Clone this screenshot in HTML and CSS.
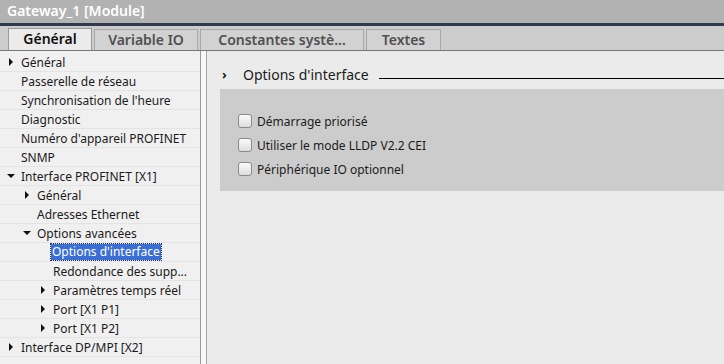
FILE: index.html
```html
<!DOCTYPE html>
<html lang="fr">
<head>
    <meta charset="UTF-8">
    <title>Gateway_1 [Module]</title>
    <link rel="stylesheet" href="styles.css">
</head>
<body>
    <div class="titlebar">Gateway_1 [Module]</div>

    <div class="tabs">
        <div class="tab active">Général</div>
        <div class="tab w-var">Variable IO</div>
        <div class="tab w-const">Constantes systè...</div>
        <div class="tab w-txt">Textes</div>
    </div>

    <div class="main">
        <div class="tree">
            <div class="row l0"><span class="arrow right"></span>Général</div>
            <div class="row l0"><span class="arrow"></span>Passerelle de réseau</div>
            <div class="row l0"><span class="arrow"></span>Synchronisation de l'heure</div>
            <div class="row l0"><span class="arrow"></span>Diagnostic</div>
            <div class="row l0"><span class="arrow"></span>Numéro d'appareil PROFINET</div>
            <div class="row l0"><span class="arrow"></span>SNMP</div>
            <div class="row l0"><span class="arrow down"></span>Interface PROFINET [X1]</div>
            <div class="row l1"><span class="arrow right"></span>Général</div>
            <div class="row l1"><span class="arrow"></span>Adresses Ethernet</div>
            <div class="row l1"><span class="arrow down"></span>Options avancées</div>
            <div class="row l2"><span class="arrow"></span><span class="selected">Options d'interface</span></div>
            <div class="row l2"><span class="arrow"></span>Redondance des supp...</div>
            <div class="row l2"><span class="arrow right"></span>Paramètres temps réel</div>
            <div class="row l2"><span class="arrow right"></span>Port [X1 P1]</div>
            <div class="row l2"><span class="arrow right"></span>Port [X1 P2]</div>
            <div class="row l0"><span class="arrow right"></span>Interface DP/MPI [X2]</div>
        </div>

        <div class="splitter"></div>

        <div class="content">
            <div class="section-head">
                <span class="chevron">›</span>
                <span class="section-title">Options d'interface</span>
                <span class="section-line"></span>
            </div>
            <div class="group">
                <label class="check"><span class="box"></span>Démarrage priorisé</label>
                <label class="check"><span class="box"></span>Utiliser le mode LLDP V2.2 CEI</label>
                <label class="check"><span class="box"></span>Périphérique IO optionnel</label>
            </div>
        </div>
    </div>
</body>
</html>
```

FILE: styles.css
```css
body {
    margin: 0;
    font-family: "Noto Sans", "Open Sans", sans-serif;
    font-size: 12px;
    color: #1b1b1b;
    background-color: #ebebeb;
    height: 364px;
    overflow: hidden;
}
.titlebar {
    height: 23px;
    line-height: 22px;
    padding-left: 7px;
    background-color: #b2b2b2;
    border-bottom: 3px solid #333a4d;
    color: #ffffff;
    font-size: 14px;
    font-weight: 600;
}
.tabs {
    display: flex;
    align-items: flex-end;
    gap: 2px;
    height: 24px;
    padding-left: 8px;
    background-color: #cccccc;
    border-bottom: 1px solid #777777;
}
.tab {
    box-sizing: border-box;
    height: 21px;
    line-height: 20px;
    text-align: center;
    font-size: 14px;
    font-weight: 600;
    color: #505050;
    background-color: #d2d2d2;
    border: 1px solid #a8a8a8;
    border-bottom: none;
}
.tab.active {
    width: 84px;
    height: 22px;
    color: #111111;
    background-color: #ebebeb;
    border-color: #9a9a9a;
}
.w-var {
    width: 104px;
}
.w-const {
    width: 164px;
}
.w-txt {
    width: 75px;
}
.main {
    display: flex;
    height: 313px;
}
.tree {
    width: 200px;
    padding-top: 2px;
    background-color: #f0f0f0;
}
.row {
    display: flex;
    align-items: center;
    height: 18px;
    border-bottom: 1px solid #e4e4e4;
    white-space: nowrap;
}
.l0 {
    padding-left: 6px;
}
.l1 {
    padding-left: 22px;
}
.l2 {
    padding-left: 38px;
}
.arrow {
    display: inline-block;
    width: 15px;
    height: 8px;
    position: relative;
}
.arrow.right::before {
    content: "";
    position: absolute;
    left: 3px;
    top: 0;
    border-left: 4px solid #111;
    border-top: 4px solid transparent;
    border-bottom: 4px solid transparent;
}
.arrow.down::before {
    content: "";
    position: absolute;
    left: 1px;
    top: 2px;
    border-top: 4px solid #111;
    border-left: 4px solid transparent;
    border-right: 4px solid transparent;
}
.selected {
    margin-left: -2px;
    padding: 0 1px;
    line-height: 16px;
    background-color: #3b6fd6;
    color: #ffffff;
    outline: 1px dotted #1c2e58;
}
.splitter {
    width: 5px;
    background-color: #f7f7f7;
    border-left: 1px solid #999999;
    border-right: 1px solid #a4a4a4;
    margin-right: 1px;
}
.content {
    flex: 1;
    padding-top: 14px;
    padding-left: 12px;
}
.section-head {
    display: flex;
    align-items: center;
    height: 18px;
}
.chevron {
    width: 21px;
    padding-left: 2px;
    font-size: 13px;
    font-weight: bold;
}
.section-title {
    font-size: 14px;
}
.section-line {
    flex: 1;
    height: 1px;
    margin-left: 10px;
    margin-top: 8px;
    background-color: #000000;
}
.group {
    margin-top: 6px;
    height: 102px;
    padding-top: 20px;
    box-sizing: border-box;
    padding-left: 18px;
    background-color: #cccccc;
}
.check {
    display: flex;
    align-items: center;
    height: 24px;
}
.box {
    box-sizing: border-box;
    width: 14px;
    height: 14px;
    margin-right: 5px;
    border: 1px solid #8a8a8a;
    border-radius: 3px;
    background: linear-gradient(#fbfbfb, #dedede);
}
```
